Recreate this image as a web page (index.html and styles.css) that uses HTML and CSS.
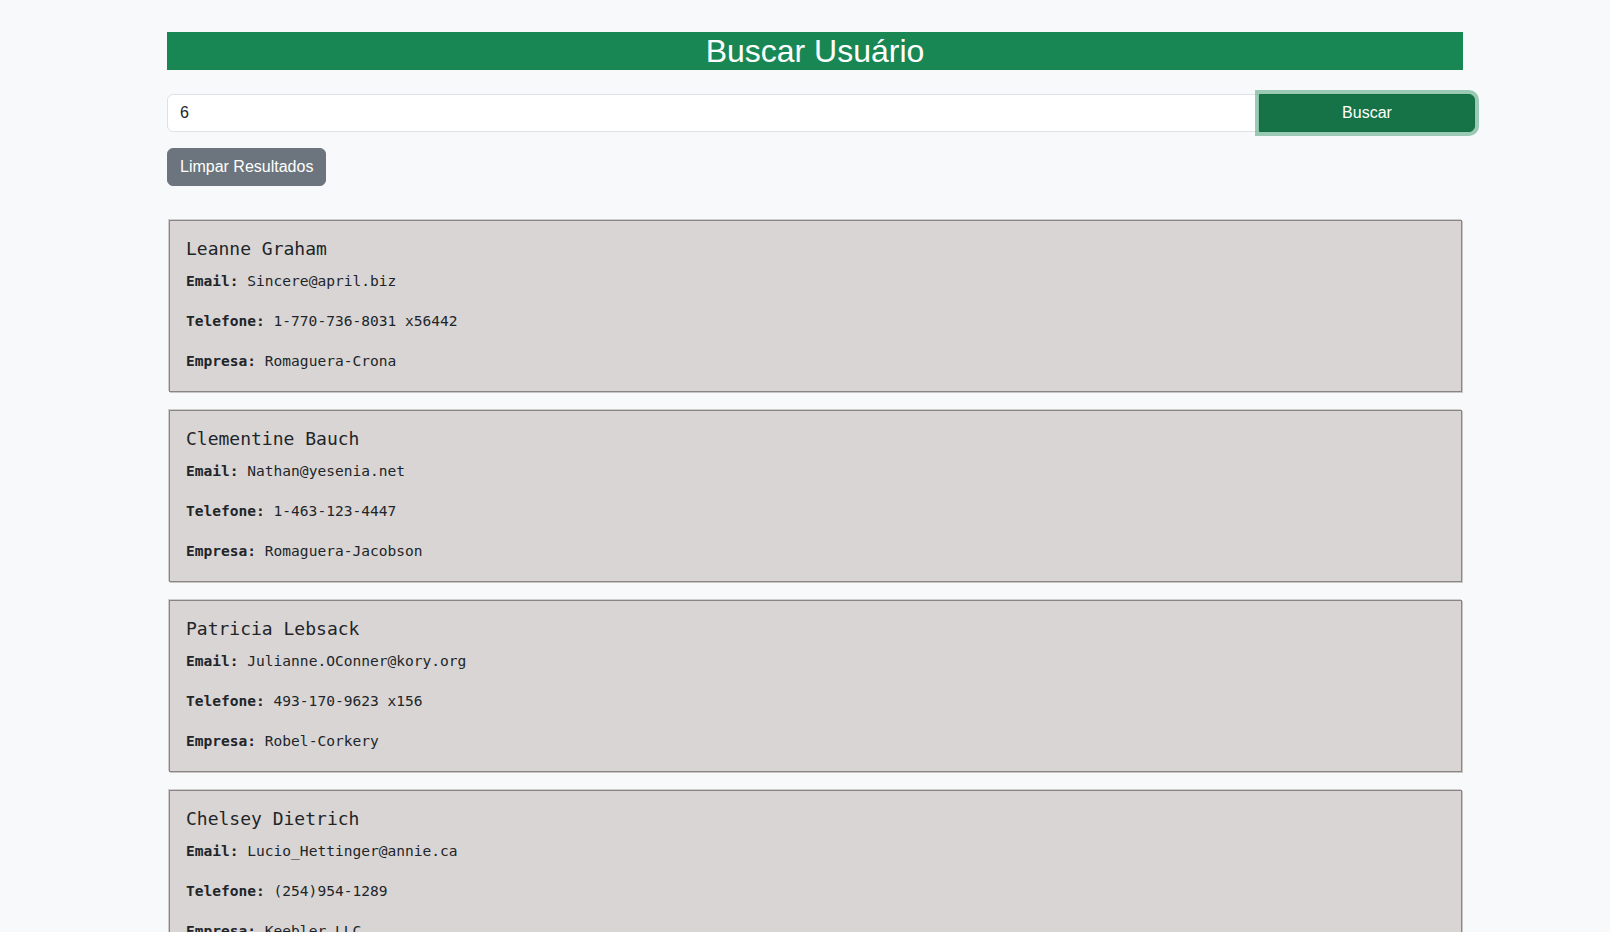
FILE: index.html
```html
<!DOCTYPE html>
<html lang="pt-BR">
<head>
<meta charset="utf-8">
<title>Buscar Usuário</title>
<link rel="stylesheet" href="styles.css">
</head>
<body>
<div class="page">
  <h2 class="title">Buscar Usuário</h2>
  <div class="search-group">
    <input class="search-input" type="text" value="6">
    <button class="btn btn-search" type="button">Buscar</button>
  </div>
  <button class="btn btn-clear" type="button">Limpar Resultados</button>
  <div class="results">
    <div class="card">
      <h5 class="card-title">Leanne Graham</h5>
      <p class="card-text"><strong>Email:</strong> Sincere@april.biz</p>
      <p class="card-text"><strong>Telefone:</strong> 1-770-736-8031 x56442</p>
      <p class="card-text"><strong>Empresa:</strong> Romaguera-Crona</p>
    </div>
    <div class="card">
      <h5 class="card-title">Clementine Bauch</h5>
      <p class="card-text"><strong>Email:</strong> Nathan@yesenia.net</p>
      <p class="card-text"><strong>Telefone:</strong> 1-463-123-4447</p>
      <p class="card-text"><strong>Empresa:</strong> Romaguera-Jacobson</p>
    </div>
    <div class="card">
      <h5 class="card-title">Patricia Lebsack</h5>
      <p class="card-text"><strong>Email:</strong> Julianne.OConner@kory.org</p>
      <p class="card-text"><strong>Telefone:</strong> 493-170-9623 x156</p>
      <p class="card-text"><strong>Empresa:</strong> Robel-Corkery</p>
    </div>
    <div class="card">
      <h5 class="card-title">Chelsey Dietrich</h5>
      <p class="card-text"><strong>Email:</strong> Lucio_Hettinger@annie.ca</p>
      <p class="card-text"><strong>Telefone:</strong> (254)954-1289</p>
      <p class="card-text"><strong>Empresa:</strong> Keebler LLC</p>
    </div>
  </div>
</div>
</body>
</html>
```

FILE: styles.css
```css
html, body {
  margin: 0;
  padding: 0;
}
body {
  background: #f8f9fa;
  color: #212529;
  font-family: "Liberation Sans", Arial, sans-serif;
  font-size: 16px;
  line-height: 1.5;
}
.page {
  width: 1296px;
  margin-left: 167px;
  padding-top: 32px;
  padding-bottom: 40px;
}
.title {
  margin: 0 0 24px 0;
  background: #198754;
  color: #ffffff;
  text-align: center;
  font-family: "Liberation Sans", Arial, sans-serif;
  font-size: 32px;
  font-weight: 400;
  line-height: 1.2;
}
.search-group {
  display: flex;
  width: 1308px;
  margin-bottom: 16px;
}
.search-input {
  flex: 1;
  min-width: 0;
  box-sizing: border-box;
  height: 38px;
  padding: 6px 12px;
  border: 1px solid #dee2e6;
  border-radius: 6px 0 0 6px;
  background: #ffffff;
  color: #212529;
  font-family: "Liberation Sans", Arial, sans-serif;
  font-size: 16px;
  line-height: 24px;
  outline: none;
}
.btn {
  box-sizing: border-box;
  height: 38px;
  padding: 6px 12px;
  border: 1px solid transparent;
  font-family: "Liberation Sans", Arial, sans-serif;
  font-size: 16px;
  line-height: 24px;
  color: #ffffff;
  cursor: pointer;
}
.btn-search {
  position: relative;
  z-index: 1;
  width: 216px;
  background: #157347;
  border-color: #146c43;
  border-radius: 0 6px 6px 0;
  box-shadow: 0 0 0 4px rgba(60, 153, 110, 0.5);
}
.btn-clear {
  display: block;
  background: #6c757d;
  border-color: #6c757d;
  border-radius: 6px;
}
.results {
  display: flex;
  flex-direction: column;
  gap: 18px;
  margin-top: 34px;
}
.card {
  margin: 0 1px 0 2px;
  padding: 16px 16px 18px 16px;
  background: #d9d5d4;
  border: 1px solid #8a8583;
  box-shadow: -1px -1px 0 #cfcdcd, 1px 1px 0 #c9c6c5;
  font-family: "DejaVu Sans Mono", "Liberation Mono", monospace;
}
.card-title {
  margin: 0 0 8px 0;
  font-size: 18px;
  font-weight: 400;
  line-height: 24px;
}
.card-text {
  margin: 0 0 16px 0;
  font-size: 14.55px;
  line-height: 24px;
}
.card-text:last-child {
  margin-bottom: 0;
}
.card-text strong {
  font-weight: 700;
}
```
